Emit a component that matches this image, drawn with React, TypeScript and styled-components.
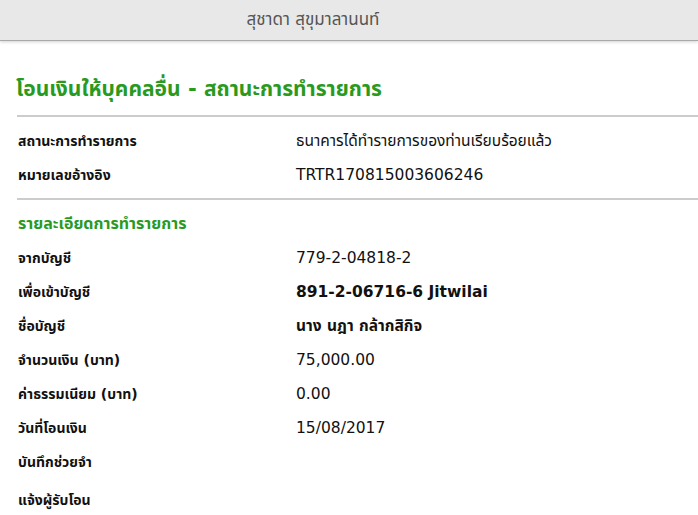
import React from "react";
import styled, { createGlobalStyle } from "styled-components";

const Global = createGlobalStyle`
  html, body { margin: 0; padding: 0; background: #ffffff; }
  body { font-family: Tahoma, "DejaVu Sans", "Noto Sans Thai", "Noto Sans", sans-serif; color: #111; }
`;

const Header = styled.header`
  height: 40px;
  background: #e8e8e8;
  border-bottom: 1px solid #a9a9a9;
  box-shadow: 0 1px 3px rgba(0, 0, 0, 0.18);
  display: flex;
  align-items: center;
  justify-content: center;
  padding-right: 72px;
`;

const UserName = styled.span`
  font-size: 17px;
  color: #555;
`;

const Main = styled.main`
  padding: 34px 0 0 16px;
`;

const Title = styled.h1`
  margin: 0;
  font-size: 21px;
  font-weight: bold;
  color: #2a9a1e;
  line-height: 28px;
`;

const Divider = styled.hr<{ $thick?: boolean }>`
  margin: ${(p) => (p.$thick ? "12px 0 7px 1px" : "6px 0 7px 1px")};
  border: 0;
  height: 2px;
  background: #cccccc;
`;

const Row = styled.div<{ $gap?: number }>`
  display: grid;
  grid-template-columns: 280px 1fr;
  align-items: center;
  height: 34px;
  margin-top: ${(p) => p.$gap ?? 0}px;
`;

const Label = styled.div`
  padding-left: 2px;
  font-size: 14px;
  font-weight: bold;
  color: #111;
`;

const Value = styled.div<{ $bold?: boolean }>`
  font-size: 15.5px;
  font-weight: ${(p) => (p.$bold ? "bold" : "normal")};
  color: #111;
`;

const Section = styled.div`
  height: 34px;
  display: flex;
  align-items: center;
  padding-left: 2px;
  font-size: 16px;
  font-weight: bold;
  color: #2a9a1e;
`;

export default function App() {
  return (
    <>
      <Global />
      <Header>
        <UserName>สุชาดา สุขุมาลานนท์</UserName>
      </Header>
      <Main>
        <Title>โอนเงินให้บุคคลอื่น - สถานะการทำรายการ</Title>
        <Divider $thick />
        <Row>
          <Label>สถานะการทำรายการ</Label>
          <Value>ธนาคารได้ทำรายการของท่านเรียบร้อยแล้ว</Value>
        </Row>
        <Row>
          <Label>หมายเลขอ้างอิง</Label>
          <Value>TRTR170815003606246</Value>
        </Row>
        <Divider />
        <Section>รายละเอียดการทำรายการ</Section>
        <Row>
          <Label>จากบัญชี</Label>
          <Value>779-2-04818-2</Value>
        </Row>
        <Row>
          <Label>เพื่อเข้าบัญชี</Label>
          <Value $bold>891-2-06716-6 Jitwilai</Value>
        </Row>
        <Row>
          <Label>ชื่อบัญชี</Label>
          <Value $bold>นาง นฎา กล้ากสิกิจ</Value>
        </Row>
        <Row>
          <Label>จำนวนเงิน (บาท)</Label>
          <Value>75,000.00</Value>
        </Row>
        <Row>
          <Label>ค่าธรรมเนียม (บาท)</Label>
          <Value>0.00</Value>
        </Row>
        <Row>
          <Label>วันที่โอนเงิน</Label>
          <Value>15/08/2017</Value>
        </Row>
        <Row>
          <Label>บันทึกช่วยจำ</Label>
          <Value></Value>
        </Row>
        <Row $gap={4}>
          <Label>แจ้งผู้รับโอน</Label>
          <Value></Value>
        </Row>
      </Main>
    </>
  );
}
